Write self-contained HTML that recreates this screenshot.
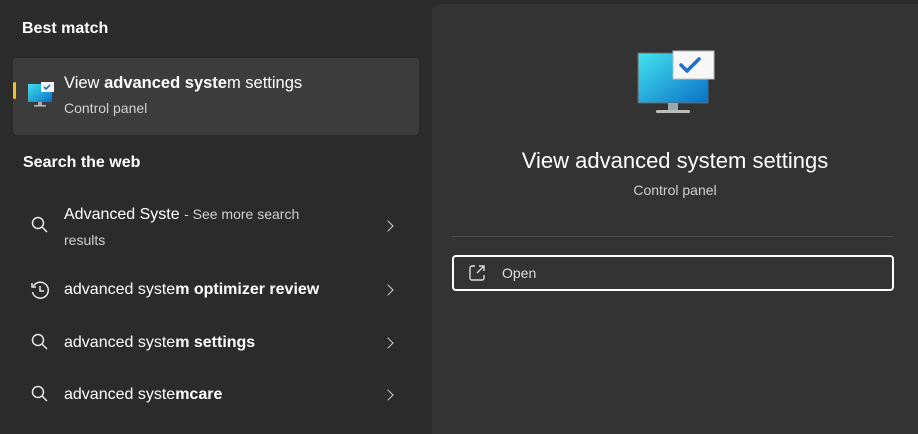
<!DOCTYPE html>
<html><head><style>
*{margin:0;padding:0;box-sizing:border-box}
body{width:918px;height:426px;background:#2b2b2b;font-family:"Liberation Sans",sans-serif;color:#fff;position:relative;overflow:hidden}
.a{position:absolute;white-space:nowrap}
b{font-weight:bold}
.h{font-size:16px;font-weight:bold}
.t{font-size:16px}
.s{font-size:14px;color:#d0d0d0}
.chev{position:absolute;left:384px;width:8px;height:8px;border-right:1.6px solid #ccc;border-top:1.6px solid #ccc;transform:rotate(45deg)}
</style></head><body>
<div class="a h" style="left:22px;top:20px">Best match</div>
<div class="a" style="left:13px;top:58px;width:406px;height:77px;background:#3c3c3c;border-radius:4px"></div>
<div class="a" style="left:13px;top:82px;width:3px;height:17px;background:#f1c40f;border-radius:2px"></div>
<svg class="a" style="left:27px;top:82px" width="30" height="28" viewBox="0 0 30 28">
<defs><linearGradient id="g1" x1="0" y1="0" x2="1" y2="1"><stop offset="0" stop-color="#3fe0ee"/><stop offset="1" stop-color="#0a6fc4"/></linearGradient></defs>
<rect x="1" y="2" width="24" height="18" fill="url(#g1)"/><rect x="11" y="20" width="4" height="3" fill="#aaa"/><rect x="7" y="23" width="12" height="1.5" fill="#bbb"/>
<rect x="14" y="0" width="13" height="10" fill="#f5f5f5"/><path d="M17 5l2 2 4-4" stroke="#1a6fd0" stroke-width="1.6" fill="none"/></svg>
<div class="a t" style="left:64px;top:74px;font-size:16.5px">View <b>advanced syste</b>m settings</div>
<div class="a s" style="left:64px;top:100px">Control panel</div>
<div class="a h" style="left:23px;top:154px">Search the web</div>

<svg class="a" style="left:31px;top:216px" width="18" height="18" viewBox="0 0 18 18"><circle cx="7" cy="7" r="5.5" stroke="#e6e6e6" stroke-width="1.5" fill="none"/><path d="M11 11l5 5" stroke="#e6e6e6" stroke-width="1.5"/></svg>
<div class="a t" style="left:64px;top:206px">Advanced Syste <span class="s" style="font-size:14px">- See more search</span></div>
<div class="a s" style="left:64px;top:232px">results</div>
<div class="chev" style="top:222px"></div>

<svg class="a" style="left:30px;top:280px" width="20" height="20" viewBox="0 0 20 20"><path d="M3.5 6A8 8 0 1 1 2.5 12" stroke="#e6e6e6" stroke-width="1.5" fill="none"/><path d="M2 3v4h4" stroke="#e6e6e6" stroke-width="1.5" fill="none"/><path d="M10 6v5h4" stroke="#e6e6e6" stroke-width="1.5" fill="none"/></svg>
<div class="a t" style="left:64px;top:281px">advanced syste<b>m optimizer review</b></div>
<div class="chev" style="top:286px"></div>

<svg class="a" style="left:31px;top:333px" width="18" height="18" viewBox="0 0 18 18"><circle cx="7" cy="7" r="5.5" stroke="#e6e6e6" stroke-width="1.5" fill="none"/><path d="M11 11l5 5" stroke="#e6e6e6" stroke-width="1.5"/></svg>
<div class="a t" style="left:64px;top:334px">advanced syste<b>m settings</b></div>
<div class="chev" style="top:339px"></div>

<svg class="a" style="left:31px;top:385px" width="18" height="18" viewBox="0 0 18 18"><circle cx="7" cy="7" r="5.5" stroke="#e6e6e6" stroke-width="1.5" fill="none"/><path d="M11 11l5 5" stroke="#e6e6e6" stroke-width="1.5"/></svg>
<div class="a t" style="left:64px;top:386px">advanced syste<b>mcare</b></div>
<div class="chev" style="top:391px"></div>

<div class="a" style="left:432px;top:4px;width:490px;height:430px;background:#333;border-radius:6px 0 0 0"></div>
<svg class="a" style="left:636px;top:48px" width="80" height="68" viewBox="0 0 80 68">
<defs><linearGradient id="g2" x1="0" y1="0" x2="1" y2="1"><stop offset="0" stop-color="#44e4ef"/><stop offset="1" stop-color="#0b6fc6"/></linearGradient></defs>
<rect x="2" y="5" width="70" height="50" fill="url(#g2)" stroke="#666" stroke-width="1"/>
<rect x="32" y="55" width="10" height="7" fill="#9aa"/><rect x="20" y="62" width="34" height="3" rx="1" fill="#bbb"/>
<rect x="37" y="3" width="41" height="28" fill="#f7f7f7" stroke="#bbb" stroke-width="1"/>
<path d="M45 17l6 6 12-12" stroke="#1c6fd1" stroke-width="3.5" fill="none" stroke-linecap="round" stroke-linejoin="round"/></svg>
<div class="a" style="left:432px;width:486px;top:148px;text-align:center;font-size:22px">View advanced system settings</div>
<div class="a s" style="left:432px;width:486px;top:182px;text-align:center">Control panel</div>
<div class="a" style="left:452px;top:236px;width:442px;height:1px;background:#4a4a4a"></div>
<div class="a" style="left:452px;top:255px;width:442px;height:36px;border:2px solid #fff;border-radius:4px"></div>
<svg class="a" style="left:468px;top:264px" width="18" height="18" viewBox="0 0 18 18"><path d="M7 2H4a2 2 0 0 0-2 2v10a2 2 0 0 0 2 2h10a2 2 0 0 0 2-2v-3" stroke="#ddd" stroke-width="1.4" fill="none"/><path d="M9 9l7-7M11 2h5v5" stroke="#ddd" stroke-width="1.4" fill="none"/></svg>
<div class="a" style="left:502px;top:265px;font-size:14px;color:#ddd">Open</div>
</body></html>
